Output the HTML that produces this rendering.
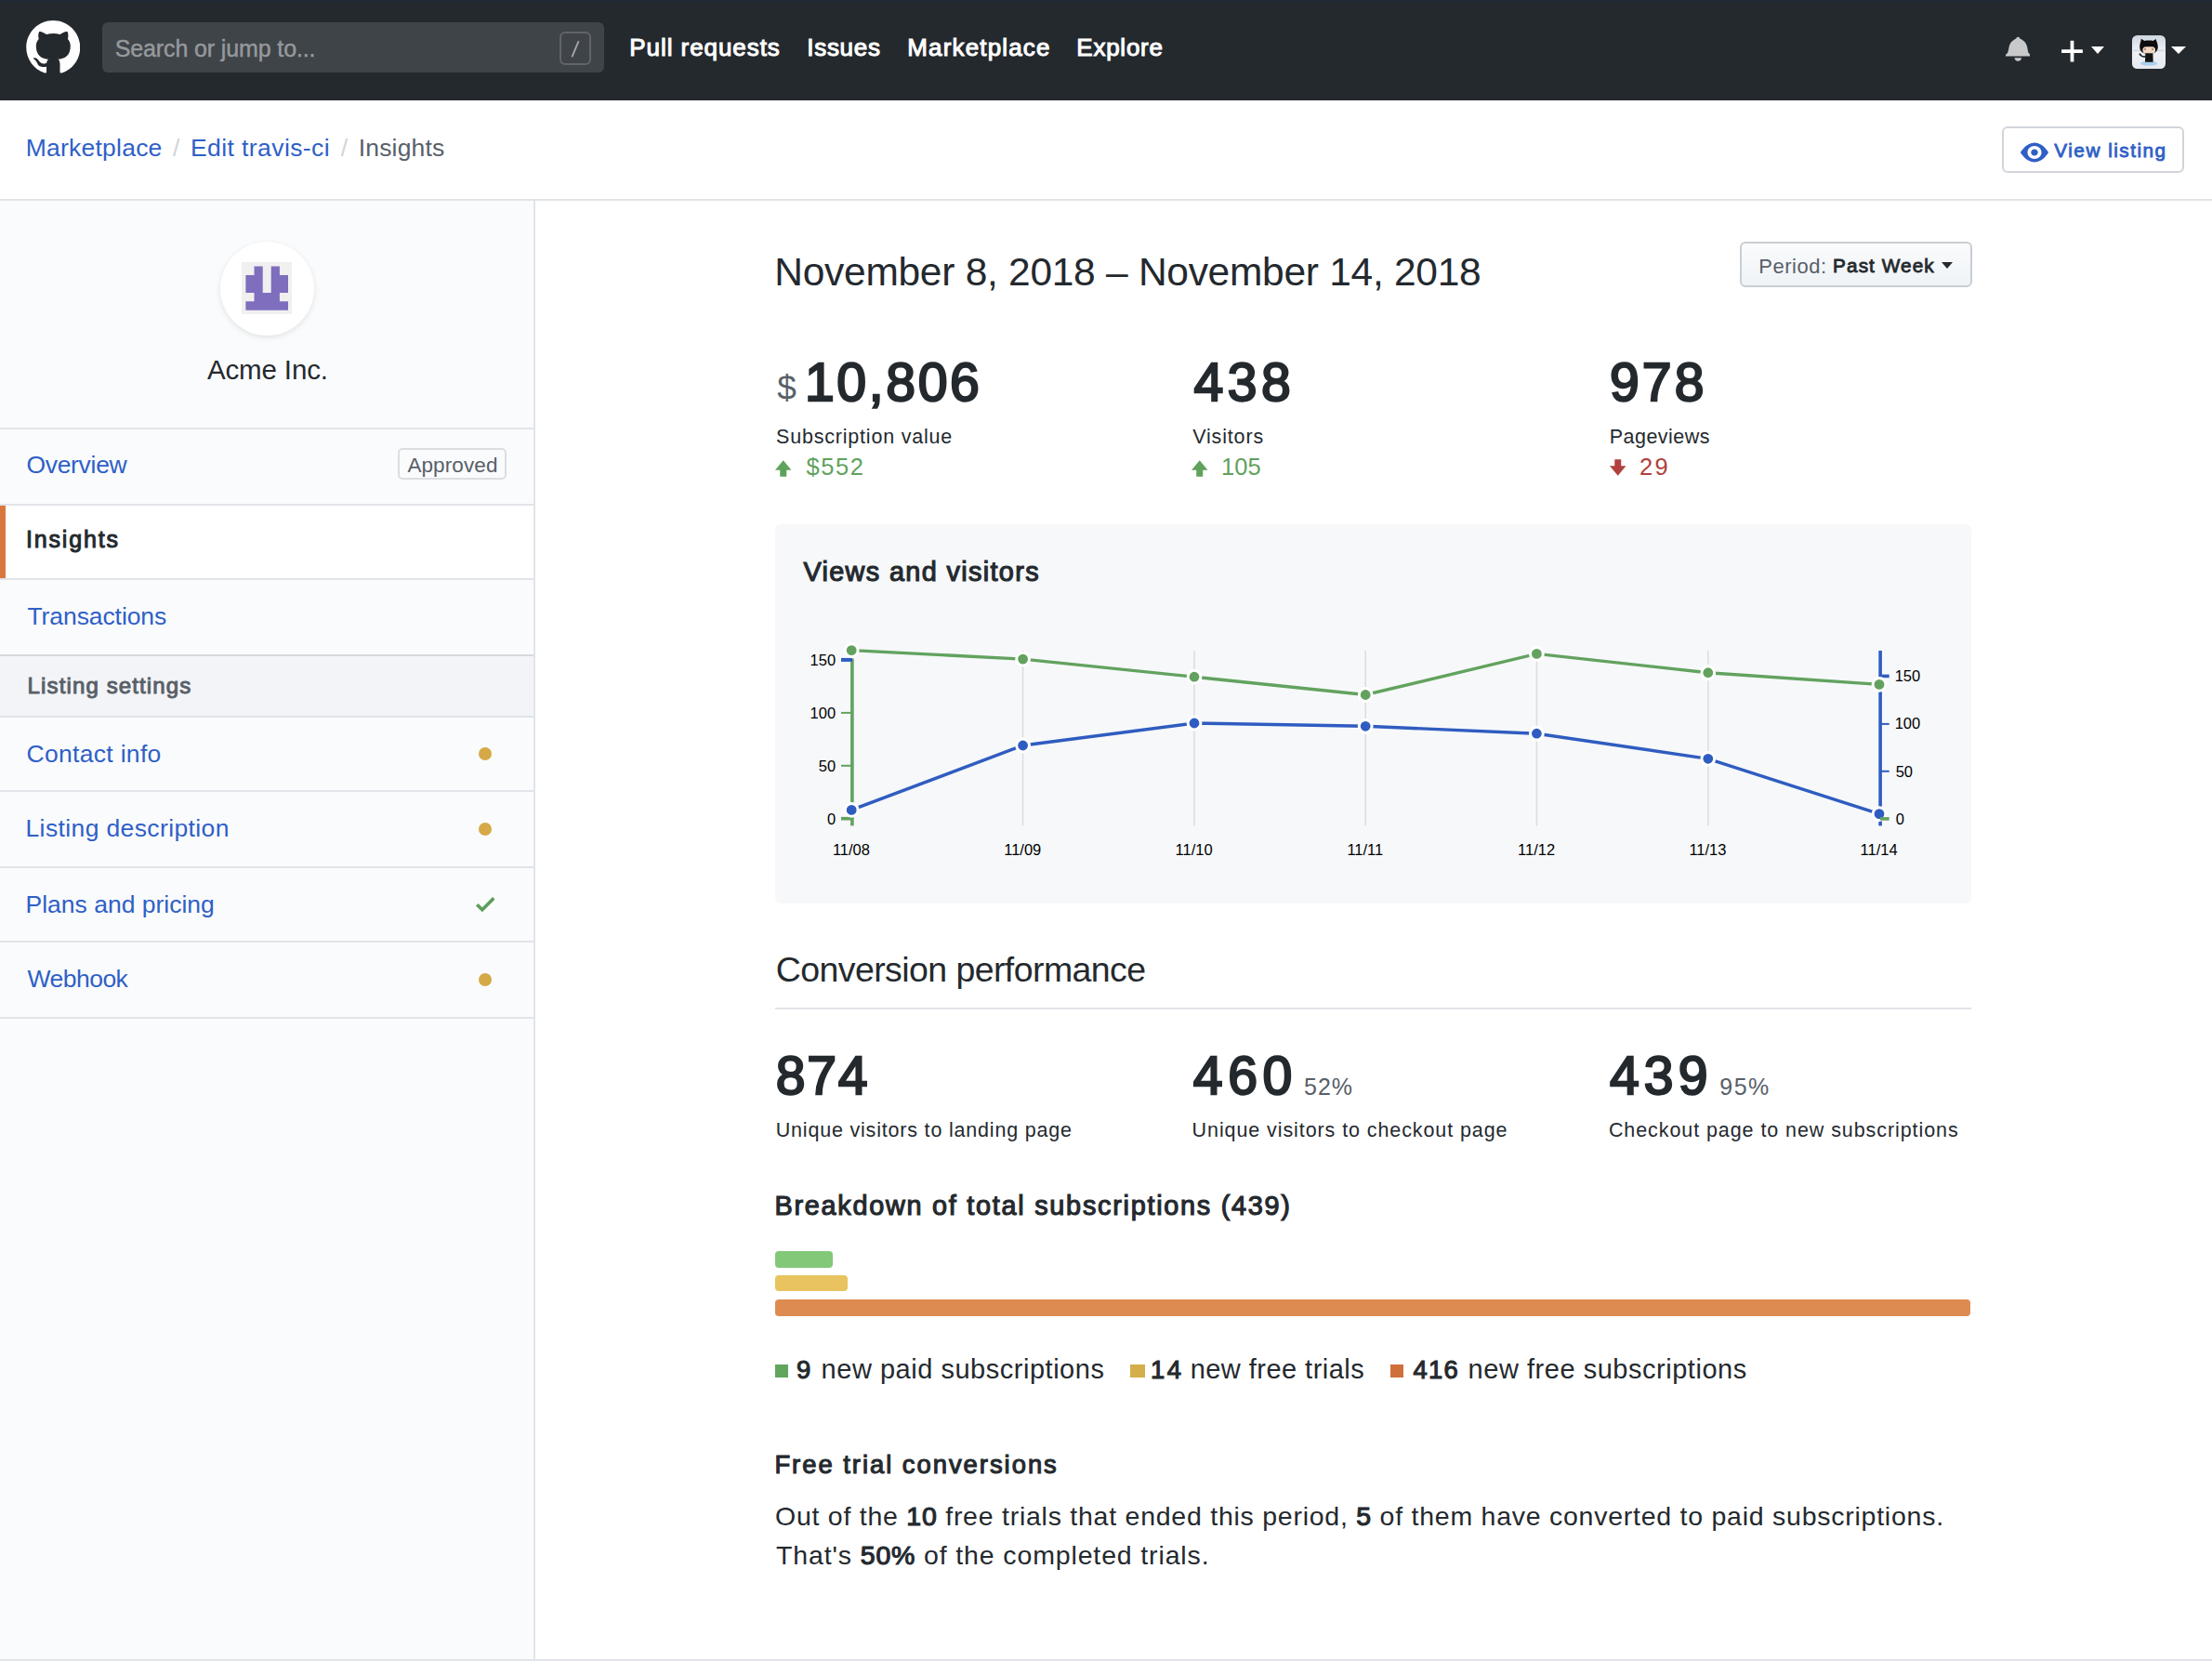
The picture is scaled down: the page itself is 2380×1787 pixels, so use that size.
<!DOCTYPE html>
<html><head><meta charset="utf-8"><title>Insights</title>
<style>
html,body{margin:0;padding:0;}
body{width:2380px;height:1787px;position:relative;overflow:hidden;background:#fff;font-family:"Liberation Sans",sans-serif;}
.a{position:absolute;}
.t{position:absolute;white-space:nowrap;font-family:"Liberation Sans",sans-serif;}
.t b{font-weight:400;-webkit-text-stroke:0.04em currentColor;}
</style></head><body>
<!-- header -->
<div class="a" style="left:0;top:0;width:2380px;height:108px;background:#24292e"></div>
<div class="a" style="left:0;top:0;width:2380px;height:1px;background:#1e2a3c"></div>
<svg class="a" style="left:27.7px;top:21.7px" width="58.5" height="58" viewBox="0 0 16 16"><path fill="#fff" d="M8 0C3.58 0 0 3.58 0 8c0 3.54 2.29 6.53 5.47 7.59.4.07.55-.17.55-.38 0-.19-.01-.82-.01-1.49-2.01.37-2.53-.49-2.69-.94-.09-.23-.48-.94-.82-1.13-.28-.15-.68-.52-.01-.53.63-.01 1.08.58 1.23.82.72 1.21 1.87.87 2.33.66.07-.52.28-.87.51-1.06-1.78-.2-3.64-.89-3.64-3.95 0-.87.31-1.59.82-2.15-.08-.2-.36-1.02.08-2.12 0 0 .67-.21 2.2.82.64-.18 1.32-.27 2-.27.68 0 1.36.09 2 .27 1.53-1.04 2.2-.82 2.2-.82.44 1.1.16 1.92.08 2.12.51.56.82 1.27.82 2.15 0 3.07-1.87 3.75-3.65 3.95.29.25.54.73.54 1.48 0 1.07-.01 1.93-.01 2.2 0 .21.15.46.55.38A8.013 8.013 0 0016 8c0-4.42-3.58-8-8-8z"/></svg>
<div class="a" style="left:110px;top:24px;width:540px;height:54px;border-radius:6px;background:#3f4448"></div>
<div class="a" style="left:602px;top:34px;width:30px;height:32px;border:2px solid #616569;border-radius:6px"></div>
<svg class="a" style="left:602px;top:34px" width="34" height="36"><line x1="13.7" y1="26.6" x2="20.3" y2="10.9" stroke="#a3a6a9" stroke-width="1.9" stroke-linecap="round"/></svg>
<!-- bell -->
<svg class="a" style="left:2157.6px;top:38.2px" width="26.6" height="27.8" viewBox="0 0 14 16" preserveAspectRatio="none"><path fill="#c7c9cb" d="M14 12v1H0v-1l.73-.58c.77-.77.81-2.55 1.19-4.42C2.69 3.23 6 2 6 2c0-.55.45-1 1-1s1 .45 1 1c0 0 3.39 1.23 4.16 5 .38 1.88.42 3.66 1.19 4.42l.66.58H14zm-7 4c1.11 0 2-.89 2-2H5c0 1.11.89 2 2 2z"/></svg>
<!-- plus -->
<svg class="a" style="left:2217.5px;top:40px" width="23" height="30.4" viewBox="0 0 12 16"><path fill="#fff" d="M12 9H7v5H5V9H0V7h5V2h2v5h5v2z"/></svg>
<div class="a" style="left:2250px;top:50px;width:0;height:0;border-left:7px solid transparent;border-right:7px solid transparent;border-top:8.5px solid #fff"></div>
<!-- avatar -->
<svg class="a" style="left:2293.9px;top:37.9px" width="36" height="36" viewBox="0 0 36 36">
<defs><linearGradient id="ag" x1="0" y1="0" x2="0" y2="1"><stop offset="0" stop-color="#cdd6e0"/><stop offset=".45" stop-color="#eef1f5"/><stop offset="1" stop-color="#e6e9ef"/></linearGradient></defs>
<rect width="36" height="36" rx="5.5" fill="url(#ag)"/>
<rect x="1" y="15.6" width="34" height="1.6" fill="#c3cad3" opacity=".7"/>
<ellipse cx="18.1" cy="30.2" rx="9" ry="2.4" fill="#a9cfee"/>
<path d="M8.2 12.5C8.2 9 9.5 7 9.8 3.8L13.5 6C15 5.4 21 5.4 22.5 6L25.6 4C26.3 7 27.8 9 27.8 12.5C27.8 17.5 24 20 18 20C12 20 8.2 17.5 8.2 12.5Z" fill="#0b0b0b"/>
<rect x="11.4" y="12.3" width="13.6" height="7.2" rx="3.5" fill="#f0d6c4"/>
<circle cx="14" cy="14.9" r=".9" fill="#8a6a5a"/><circle cx="22" cy="14.9" r=".9" fill="#8a6a5a"/>
<path d="M14.3 19.5L22.4 19.5L22.7 28.8L14 28.8Z" fill="#151515"/>
<path d="M14.5 22.8Q10.5 23.8 7.9 19.6" stroke="#151515" stroke-width="1.5" fill="none"/>
</svg>
<div class="a" style="left:2335.7px;top:50px;width:0;height:0;border-left:8px solid transparent;border-right:8px solid transparent;border-top:8.5px solid #fff"></div>

<!-- view listing button -->
<div class="a" style="left:2154px;top:136px;width:192px;height:46px;border:2px solid #d1d5da;border-radius:6px;background:#fff"></div>
<svg class="a" style="left:2174px;top:149.9px" width="30" height="28" viewBox="0 0 16 16" preserveAspectRatio="none"><path fill="#2f5fc7" d="M8.06 2C3 2 0 8 0 8s3 6 8.06 6C13 14 16 8 16 8s-3-6-7.94-6zM8 12c-2.2 0-4-1.78-4-4 0-2.2 1.8-4 4-4 2.22 0 4 1.8 4 4 0 2.22-1.78 4-4 4zm2-4c0 1.11-.89 2-2 2-1.11 0-2-.89-2-2 0-1.11.89-2 2-2 1.11 0 2 .89 2 2z"/></svg>
<div class="a" style="left:0;top:214px;width:2380px;height:2px;background:#e1e4e8"></div>

<!-- sidebar -->
<div class="a" style="left:0;top:216px;width:574px;height:1569px;background:#fafbfc"></div>
<div class="a" style="left:574px;top:216px;width:2px;height:1569px;background:#e1e4e8"></div>
<div class="a" style="left:236.5px;top:259.5px;width:101px;height:101px;border-radius:50.5px;background:#fff;box-shadow:0 2px 6px rgba(0,0,0,.10)"></div>
<svg class="a" style="left:260px;top:282px" width="54" height="56">
<rect x="0" y="0" width="54" height="56" fill="#f0f0f0"/>
<path fill="#7f6dbd" transform="translate(4.4,4.6) scale(1,1.032)" d="M9.1 0H18.3V9.1H27.3V0H36.5V9.1H45.6V27.4H36.5V36.5H45.6V45.6H0V36.5H9.1V27.4H0V9.1H9.1Z M18.3 9.1V27.4H27.3V9.1Z"/>
</svg>
<div class="a" style="left:0;top:460px;width:574px;height:2px;background:#e1e4e8"></div>
<div class="a" style="left:428.4px;top:482.3px;width:113px;height:29.3px;border:2px solid #dcdee1;border-radius:5px"></div>
<div class="a" style="left:0;top:542px;width:574px;height:2px;background:#e1e4e8"></div>
<div class="a" style="left:0;top:544px;width:574px;height:78px;background:#fff"></div>
<div class="a" style="left:0;top:544px;width:6px;height:78px;background:#d8773e"></div>
<div class="a" style="left:0;top:622px;width:574px;height:2px;background:#e1e4e8"></div>
<div class="a" style="left:0;top:704px;width:574px;height:2px;background:#d6d9dd"></div>
<div class="a" style="left:0;top:706px;width:574px;height:64px;background:#f3f4f7"></div>
<div class="a" style="left:0;top:770px;width:574px;height:2px;background:#e1e4e8"></div>
<div class="a" style="left:0;top:850px;width:574px;height:2px;background:#e1e4e8"></div>
<div class="a" style="left:0;top:931.5px;width:574px;height:2px;background:#e1e4e8"></div>
<div class="a" style="left:0;top:1012px;width:574px;height:2px;background:#e1e4e8"></div>
<div class="a" style="left:0;top:1094px;width:574px;height:2px;background:#e1e4e8"></div>
<div class="a" style="left:514.8px;top:804px;width:14px;height:14px;border-radius:7px;background:#d5a947"></div>
<div class="a" style="left:514.8px;top:884.7px;width:14px;height:14px;border-radius:7px;background:#d5a947"></div>
<div class="a" style="left:514.8px;top:1046.6px;width:14px;height:14px;border-radius:7px;background:#d5a947"></div>
<svg class="a" style="left:511.8px;top:959px" width="20.6" height="27.5" viewBox="0 0 12 16"><path fill="#5c9e5b" d="M12 5l-8 8-4-4 1.5-1.5L4 10l6.5-6.5L12 5z"/></svg>
<div class="a" style="left:0;top:1785px;width:2380px;height:2px;background:#e1e4e8"></div>

<!-- main -->
<div class="a" style="left:1872.4px;top:260.4px;width:246px;height:45px;border:2px solid #c9ced3;border-radius:6px;background:linear-gradient(#fafbfc,#eff3f6)"></div>
<div class="a" style="left:2088.5px;top:282.3px;width:0;height:0;border-left:6.7px solid transparent;border-right:6.7px solid transparent;border-top:7.8px solid #24292e"></div>

<svg class="a" style="left:834.1px;top:489.6px" width="17.5" height="28" viewBox="0 0 10 16"><path fill="#5fa25c" d="M5 3L0 9h3v4h4V9h3L5 3z"/></svg>
<svg class="a" style="left:1282.4px;top:489.6px" width="17.5" height="28" viewBox="0 0 10 16"><path fill="#5fa25c" d="M5 3L0 9h3v4h4V9h3L5 3z"/></svg>
<svg class="a" style="left:1732.3px;top:488.5px" width="17.5" height="28" viewBox="0 0 10 16"><path fill="#b0413e" d="M7 7V3H3v4H0l5 6 5-6H7z"/></svg>

<!-- chart panel -->
<div class="a" style="left:834px;top:564px;width:1287px;height:408px;border-radius:6px;background:#f6f8fa"></div>
<svg class="a" style="left:0;top:0" width="2380" height="1000">
<g stroke="#dcdde0" stroke-width="1.5">
<line x1="1100.6" y1="700" x2="1100.6" y2="888.5"/>
<line x1="1285" y1="700" x2="1285" y2="888.5"/>
<line x1="1469.2" y1="700" x2="1469.2" y2="888.5"/>
<line x1="1653.4" y1="700" x2="1653.4" y2="888.5"/>
<line x1="1837.8" y1="700" x2="1837.8" y2="888.5"/>
</g>
<!-- left axis -->
<line x1="916.9" y1="708.6" x2="916.9" y2="888.4" stroke="#62a25e" stroke-width="3.6"/>
<line x1="905" y1="766.9" x2="916" y2="766.9" stroke="#62a25e" stroke-width="2"/>
<line x1="905" y1="823.8" x2="916" y2="823.8" stroke="#62a25e" stroke-width="2"/>
<line x1="905" y1="880.7" x2="917" y2="880.7" stroke="#62a25e" stroke-width="3.6"/>
<line x1="905" y1="709.9" x2="917" y2="709.9" stroke="#2f5cc0" stroke-width="4"/>
<!-- right axis -->
<line x1="2023.1" y1="700" x2="2023.1" y2="888.4" stroke="#2f5cc0" stroke-width="3.6"/>
<line x1="2023" y1="727.4" x2="2032.7" y2="727.4" stroke="#2f5cc0" stroke-width="3.6"/>
<line x1="2023" y1="778.9" x2="2032.7" y2="778.9" stroke="#2f5cc0" stroke-width="2"/>
<line x1="2023" y1="829.8" x2="2032.7" y2="829.8" stroke="#2f5cc0" stroke-width="2"/>
<!-- lines -->
<polyline fill="none" stroke="#62a25e" stroke-width="3.4" points="916.2,699.6 1100.6,709.1 1285,728.2 1469.2,747.5 1653.4,703.4 1837.8,723.7 2022,736.4"/>
<polyline fill="none" stroke="#2f5cc0" stroke-width="3.4" points="916.2,871.4 1100.6,802 1285,778 1469.2,781.3 1653.4,789.2 1837.8,816.3 2022,875.6"/>
<g fill="#62a25e" stroke="#fff" stroke-width="3">
<circle cx="916.2" cy="699.6" r="6.9"/><circle cx="1100.6" cy="709.1" r="6.9"/><circle cx="1285" cy="728.2" r="6.9"/><circle cx="1469.2" cy="747.5" r="6.9"/><circle cx="1653.4" cy="703.4" r="6.9"/><circle cx="1837.8" cy="723.7" r="6.9"/><circle cx="2022" cy="736.4" r="6.9"/>
</g>
<g fill="#2f5cc0" stroke="#fff" stroke-width="3">
<circle cx="916.2" cy="871.4" r="6.9"/><circle cx="1100.6" cy="802" r="6.9"/><circle cx="1285" cy="778" r="6.9"/><circle cx="1469.2" cy="781.3" r="6.9"/><circle cx="1653.4" cy="789.2" r="6.9"/><circle cx="1837.8" cy="816.3" r="6.9"/><circle cx="2022" cy="875.6" r="6.9"/>
</g>
<line x1="2023" y1="880.9" x2="2032.7" y2="880.9" stroke="#62a25e" stroke-width="3.6"/>
</svg>

<div class="a" style="left:834px;top:1084px;width:1287px;height:2px;background:#e1e4e8"></div>

<!-- bars -->
<div class="a" style="left:834px;top:1346px;width:62px;height:17.8px;border-radius:4px;background:#82c878"></div>
<div class="a" style="left:834px;top:1372.2px;width:77.7px;height:17.3px;border-radius:4px;background:#e8c35f"></div>
<div class="a" style="left:834px;top:1398px;width:1285.7px;height:17.6px;border-radius:4px;background:#de8b52"></div>
<div class="a" style="left:833.8px;top:1467.7px;width:14.5px;height:14.7px;background:#62a65e"></div>
<div class="a" style="left:1216px;top:1467.7px;width:16px;height:14.7px;background:#d4ae4b"></div>
<div class="a" style="left:1496.1px;top:1467.5px;width:13.9px;height:14.6px;background:#cf703c"></div>

<div class="t" style="left:123.7px;top:39.5px;font-size:25.00px;line-height:25.00px;color:#95999d;letter-spacing:-0.12px;-webkit-text-stroke:0.45px #95999d">Search or jump to...</div>
<div class="t" style="left:677.3px;top:38.4px;font-size:25.99px;line-height:25.99px;color:#ffffff;-webkit-text-stroke:1.04px #ffffff;letter-spacing:0.94px">Pull requests</div>
<div class="t" style="left:868.3px;top:38.4px;font-size:25.99px;line-height:25.99px;color:#ffffff;-webkit-text-stroke:1.04px #ffffff;letter-spacing:0.70px">Issues</div>
<div class="t" style="left:976.3px;top:38.4px;font-size:25.99px;line-height:25.99px;color:#ffffff;-webkit-text-stroke:1.04px #ffffff;letter-spacing:1.16px">Marketplace</div>
<div class="t" style="left:1158.3px;top:38.4px;font-size:25.99px;line-height:25.99px;color:#ffffff;-webkit-text-stroke:1.04px #ffffff;letter-spacing:0.76px">Explore</div>
<div class="t" style="left:27.8px;top:145.5px;font-size:26.50px;line-height:26.50px;color:#2f5fc7;letter-spacing:0.22px">Marketplace</div>
<div class="t" style="left:186.0px;top:145.5px;font-size:26.50px;line-height:26.50px;color:#d1d5da">/</div>
<div class="t" style="left:205.0px;top:145.5px;font-size:26.50px;line-height:26.50px;color:#2f5fc7;letter-spacing:0.41px">Edit travis-ci</div>
<div class="t" style="left:366.8px;top:145.5px;font-size:26.50px;line-height:26.50px;color:#d1d5da">/</div>
<div class="t" style="left:385.8px;top:145.5px;font-size:26.50px;line-height:26.50px;color:#586069;letter-spacing:0.15px">Insights</div>
<div class="t" style="left:2210.3px;top:152.1px;font-size:20.79px;line-height:20.79px;color:#2f5fc7;-webkit-text-stroke:0.83px #2f5fc7;letter-spacing:1.48px">View listing</div>
<div class="t" style="left:222.9px;top:382.9px;font-size:29.50px;line-height:29.50px;color:#24292e;letter-spacing:-0.13px">Acme Inc.</div>
<div class="t" style="left:28.4px;top:487.2px;font-size:26.50px;line-height:26.50px;color:#2f5fc7;letter-spacing:-0.30px">Overview</div>
<div class="t" style="left:438.4px;top:489.9px;font-size:22.50px;line-height:22.50px;color:#586069;letter-spacing:0.10px">Approved</div>
<div class="t" style="left:27.9px;top:567.9px;font-size:25.04px;line-height:25.04px;color:#24292e;-webkit-text-stroke:1.00px #24292e;letter-spacing:1.84px">Insights</div>
<div class="t" style="left:29.5px;top:650.0px;font-size:26.50px;line-height:26.50px;color:#2f5fc7;letter-spacing:-0.09px">Transactions</div>
<div class="t" style="left:29.6px;top:725.5px;font-size:24.10px;line-height:24.10px;color:#586069;-webkit-text-stroke:0.96px #586069;letter-spacing:1.09px">Listing settings</div>
<div class="t" style="left:28.5px;top:798.1px;font-size:26.50px;line-height:26.50px;color:#2f5fc7;letter-spacing:0.31px">Contact info</div>
<div class="t" style="left:27.5px;top:877.5px;font-size:26.50px;line-height:26.50px;color:#2f5fc7;letter-spacing:0.38px">Listing description</div>
<div class="t" style="left:27.5px;top:959.5px;font-size:26.50px;line-height:26.50px;color:#2f5fc7">Plans and pricing</div>
<div class="t" style="left:29.5px;top:1039.5px;font-size:26.50px;line-height:26.50px;color:#2f5fc7;letter-spacing:-0.52px">Webhook</div>
<div class="t" style="left:833.3px;top:271.5px;font-size:42.50px;line-height:42.50px;color:#24292e;letter-spacing:-0.28px">November 8, 2018 &ndash; November 14, 2018</div>
<div class="t" style="left:1892.2px;top:275.8px;font-size:22.00px;line-height:22.00px;color:#586069;letter-spacing:0.53px">Period:</div>
<div class="t" style="left:1972.1px;top:276.4px;font-size:20.79px;line-height:20.79px;color:#24292e;-webkit-text-stroke:0.83px #24292e;letter-spacing:1.07px">Past Week</div>
<div class="t" style="left:836.3px;top:398.6px;font-size:37.00px;line-height:37.00px;color:#586069">$</div>
<div class="t" style="left:865.9px;top:383.2px;font-size:57.17px;line-height:57.17px;color:#24292e;-webkit-text-stroke:2.29px #24292e;letter-spacing:2.64px">10,806</div>
<div class="t" style="left:1284.4px;top:383.2px;font-size:57.17px;line-height:57.17px;color:#24292e;-webkit-text-stroke:2.29px #24292e;letter-spacing:4.52px">438</div>
<div class="t" style="left:1731.9px;top:383.2px;font-size:57.17px;line-height:57.17px;color:#24292e;-webkit-text-stroke:2.29px #24292e;letter-spacing:3.17px">978</div>
<div class="t" style="left:835.0px;top:459.5px;font-size:21.50px;line-height:21.50px;color:#24292e;letter-spacing:0.80px">Subscription value</div>
<div class="t" style="left:1283.2px;top:459.5px;font-size:21.50px;line-height:21.50px;color:#24292e;letter-spacing:0.84px">Visitors</div>
<div class="t" style="left:1731.8px;top:459.5px;font-size:21.50px;line-height:21.50px;color:#24292e;letter-spacing:0.46px">Pageviews</div>
<div class="t" style="left:867.5px;top:489.9px;font-size:25.50px;line-height:25.50px;color:#5fa25c;letter-spacing:1.55px">$552</div>
<div class="t" style="left:1314.0px;top:489.9px;font-size:25.50px;line-height:25.50px;color:#5fa25c;letter-spacing:0.07px">105</div>
<div class="t" style="left:1764.0px;top:489.9px;font-size:25.50px;line-height:25.50px;color:#b0413e;letter-spacing:2.22px">29</div>
<div class="t" style="left:864.4px;top:600.9px;font-size:28.82px;line-height:28.82px;color:#24292e;-webkit-text-stroke:1.15px #24292e;letter-spacing:1.36px">Views and visitors</div>
<div class="t" style="left:834.7px;top:1024.7px;font-size:37.50px;line-height:37.50px;color:#24292e;letter-spacing:-0.58px">Conversion performance</div>
<div class="t" style="left:834.8px;top:1128.5px;font-size:57.17px;line-height:57.17px;color:#24292e;-webkit-text-stroke:2.29px #24292e;letter-spacing:1.67px">874</div>
<div class="t" style="left:1283.7px;top:1128.5px;font-size:57.17px;line-height:57.17px;color:#24292e;-webkit-text-stroke:2.29px #24292e;letter-spacing:5.67px">460</div>
<div class="t" style="left:1403.1px;top:1156.8px;font-size:25.00px;line-height:25.00px;color:#586069;letter-spacing:0.90px">52%</div>
<div class="t" style="left:1732.0px;top:1128.5px;font-size:57.17px;line-height:57.17px;color:#24292e;-webkit-text-stroke:2.29px #24292e;letter-spacing:5.07px">439</div>
<div class="t" style="left:1850.3px;top:1156.8px;font-size:25.00px;line-height:25.00px;color:#586069;letter-spacing:1.45px">95%</div>
<div class="t" style="left:834.7px;top:1206.0px;font-size:21.50px;line-height:21.50px;color:#24292e;letter-spacing:0.81px">Unique visitors to landing page</div>
<div class="t" style="left:1282.6px;top:1206.0px;font-size:21.50px;line-height:21.50px;color:#24292e;letter-spacing:0.91px">Unique visitors to checkout page</div>
<div class="t" style="left:1730.9px;top:1206.0px;font-size:21.50px;line-height:21.50px;color:#24292e;letter-spacing:0.92px">Checkout page to new subscriptions</div>
<div class="t" style="left:833.5px;top:1283.4px;font-size:28.82px;line-height:28.82px;color:#24292e;-webkit-text-stroke:1.15px #24292e;letter-spacing:1.74px">Breakdown of total subscriptions (439)</div>
<div class="t" style="left:857.0px;top:1460.2px;font-size:27.40px;line-height:27.40px;color:#24292e;-webkit-text-stroke:1.10px #24292e">9</div>
<div class="t" style="left:883.6px;top:1459.3px;font-size:29.00px;line-height:29.00px;color:#24292e;letter-spacing:0.52px">new paid subscriptions</div>
<div class="t" style="left:1238.1px;top:1460.2px;font-size:27.40px;line-height:27.40px;color:#24292e;-webkit-text-stroke:1.10px #24292e;letter-spacing:2.37px">14</div>
<div class="t" style="left:1280.7px;top:1459.3px;font-size:29.00px;line-height:29.00px;color:#24292e;letter-spacing:0.46px">new free trials</div>
<div class="t" style="left:1520.4px;top:1460.2px;font-size:27.40px;line-height:27.40px;color:#24292e;-webkit-text-stroke:1.10px #24292e;letter-spacing:1.37px">416</div>
<div class="t" style="left:1579.6px;top:1459.3px;font-size:29.00px;line-height:29.00px;color:#24292e;letter-spacing:0.53px">new free subscriptions</div>
<div class="t" style="left:833.4px;top:1561.8px;font-size:27.40px;line-height:27.40px;color:#24292e;-webkit-text-stroke:1.10px #24292e;letter-spacing:1.98px">Free trial conversions</div>
<div class="t" style="left:834.0px;top:1617.2px;font-size:28.50px;line-height:28.50px;color:#24292e;letter-spacing:0.75px">Out of the <b>10</b> free trials that ended this period, <b>5</b> of them have converted to paid subscriptions.</div>
<div class="t" style="left:835.0px;top:1659.0px;font-size:28.50px;line-height:28.50px;color:#24292e;letter-spacing:0.86px">That's <b>50%</b> of the completed trials.</div>
<div class="t" style="left:871.6px;top:701.8px;font-size:16.50px;line-height:16.50px;color:#000000">150</div>
<div class="t" style="left:871.6px;top:758.7px;font-size:16.50px;line-height:16.50px;color:#000000">100</div>
<div class="t" style="left:880.8px;top:815.7px;font-size:16.50px;line-height:16.50px;color:#000000">50</div>
<div class="t" style="left:890.0px;top:872.6px;font-size:16.50px;line-height:16.50px;color:#000000">0</div>
<div class="t" style="left:2038.7px;top:718.6px;font-size:16.50px;line-height:16.50px;color:#000000">150</div>
<div class="t" style="left:2038.7px;top:769.7px;font-size:16.50px;line-height:16.50px;color:#000000">100</div>
<div class="t" style="left:2039.7px;top:821.7px;font-size:16.50px;line-height:16.50px;color:#000000">50</div>
<div class="t" style="left:2039.7px;top:872.8px;font-size:16.50px;line-height:16.50px;color:#000000">0</div>
<div class="t" style="left:895.9px;top:905.6px;font-size:16.50px;line-height:16.50px;color:#000000">11/08</div>
<div class="t" style="left:1080.2px;top:905.6px;font-size:16.50px;line-height:16.50px;color:#000000">11/09</div>
<div class="t" style="left:1264.6px;top:905.6px;font-size:16.50px;line-height:16.50px;color:#000000">11/10</div>
<div class="t" style="left:1449.4px;top:905.6px;font-size:16.50px;line-height:16.50px;color:#000000">11/11</div>
<div class="t" style="left:1633.0px;top:905.6px;font-size:16.50px;line-height:16.50px;color:#000000">11/12</div>
<div class="t" style="left:1817.4px;top:905.6px;font-size:16.50px;line-height:16.50px;color:#000000">11/13</div>
<div class="t" style="left:2001.6px;top:905.6px;font-size:16.50px;line-height:16.50px;color:#000000">11/14</div>
</body></html>
